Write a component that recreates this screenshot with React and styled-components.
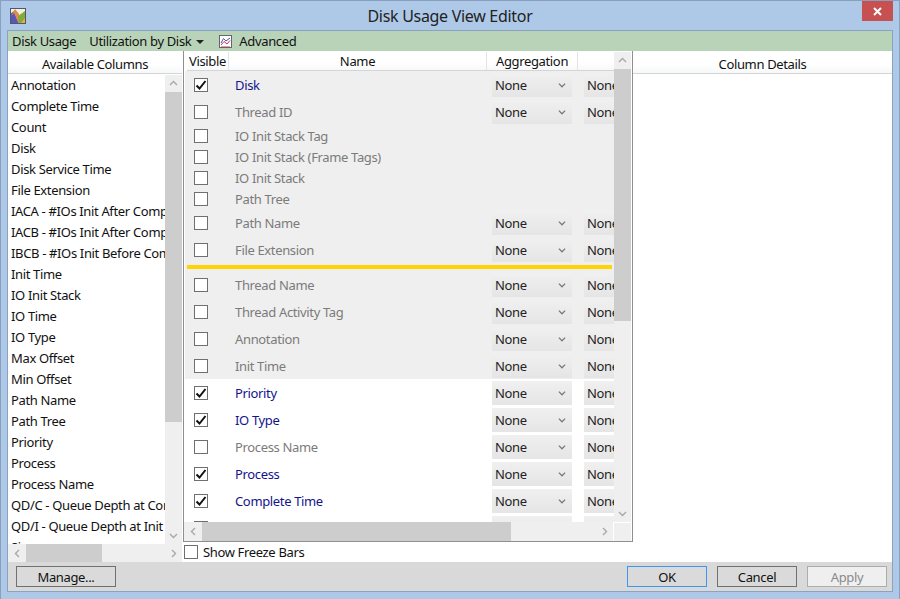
import React from "react";
import styled, { createGlobalStyle } from "styled-components";

const GlobalStyle = createGlobalStyle`
  html, body {
    margin: 0;
    padding: 0;
    background: #aec9e7;
  }
  * {
    box-sizing: border-box;
  }
`;

const Window = styled.div`
  width: 900px;
  height: 599px;
  background: #aec9e7;
  border: 1px solid #8a9fbd;
  border-bottom: 0;
  padding: 0 6px 7px;
  display: flex;
  flex-direction: column;
  font-family: "Noto Sans", "Open Sans", sans-serif;
  font-size: 13px;
  letter-spacing: -0.35px;
  color: #111;
  overflow: hidden;
`;

const TitleBar = styled.div`
  height: 29px;
  flex: none;
  display: flex;
  align-items: center;
  position: relative;
  padding-left: 3px;
`;

const Title = styled.div`
  flex: 1;
  text-align: center;
  font-size: 16px;
  letter-spacing: -0.3px;
  color: #222;
  padding-right: 19px;
`;

const CloseButton = styled.div`
  position: absolute;
  top: 0;
  right: 0;
  width: 31px;
  height: 20px;
  background: #c75050;
  display: flex;
  align-items: center;
  justify-content: center;
`;

const Frame = styled.div`
  flex: 1;
  min-height: 0;
  border: 1px solid #8aa3c0;
  display: flex;
  flex-direction: column;
`;

const Toolbar = styled.div`
  height: 20px;
  flex: none;
  background: #b9d3b8;
  display: flex;
  align-items: center;
  padding-left: 4px;
  line-height: 20px;
`;

const ToolItem = styled.span`
  display: inline-flex;
  align-items: center;
  margin-right: ${(p) => p.$gap || 0}px;
`;

const Caret = styled.span`
  display: inline-block;
  width: 0;
  height: 0;
  margin-left: 5px;
  margin-top: 1px;
  border-left: 4px solid transparent;
  border-right: 4px solid transparent;
  border-top: 4px solid #222;
`;

const Body = styled.div`
  flex: 1;
  min-height: 0;
  background: #fff;
  display: flex;
`;

const LeftPane = styled.div`
  width: 174px;
  flex: none;
  display: flex;
  flex-direction: column;
`;

const PaneHeader = styled.div`
  height: 23px;
  flex: none;
  text-align: center;
  line-height: 26px;
  background: linear-gradient(#fff 60%, #f7f8f9);
  border-bottom: 1px solid #d5d5d5;
`;

const ListArea = styled.div`
  flex: 1;
  min-height: 0;
  display: flex;
`;

const ColumnList = styled.div`
  flex: 1;
  min-width: 0;
  overflow: hidden;
  padding-top: 1px;
`;

const ColumnItem = styled.div`
  height: 21px;
  line-height: 21px;
  padding-left: 3px;
  white-space: nowrap;
  overflow: hidden;
`;

const VScroll = styled.div`
  width: 17px;
  flex: none;
  background: #efefef;
  display: flex;
  flex-direction: column;
  margin-top: ${(p) => p.$top || 0}px;
`;

const HScroll = styled.div`
  height: ${(p) => p.$h}px;
  flex: none;
  background: #efefef;
  display: flex;
  align-items: stretch;
`;

const ScrollArrow = styled.div`
  flex: none;
  width: ${(p) => p.$size}px;
  height: ${(p) => p.$size}px;
  display: flex;
  align-items: center;
  justify-content: center;
  ${(p) => p.$tail && "margin-top: auto;"}
  ${(p) => p.$end && "margin-left: auto; height: auto;"}
  ${(p) => p.$horizontal && "height: auto;"}
`;

const VThumb = styled.div`
  height: ${(p) => p.$len}px;
  flex: none;
  background: #cdcdcd;
`;

const HThumb = styled.div`
  width: ${(p) => p.$len}px;
  flex: none;
  background: #cdcdcd;
`;

const ScrollCorner = styled.div`
  width: 18px;
  flex: none;
  border-left: 1px solid #fff;
  border-top: 1px solid #fff;
`;

const Splitter = styled.div`
  width: 1px;
  flex: none;
  background: #fff;
`;

const MiddlePane = styled.div`
  width: 450px;
  flex: none;
  display: flex;
  flex-direction: column;
`;

const GridFrame = styled.div`
  flex: 1;
  min-height: 0;
  border-left: 1px solid #8f8f8f;
  border-right: 1px solid #8f8f8f;
  border-bottom: 1px solid #8f8f8f;
  display: flex;
  flex-direction: column;
  padding: 1px 1px 0 0;
`;

const GridTop = styled.div`
  flex: 1;
  min-height: 0;
  display: flex;
`;

const GridMain = styled.div`
  flex: 1;
  min-width: 0;
  display: flex;
  flex-direction: column;
  overflow: hidden;
`;

const GridHeader = styled.div`
  height: 19px;
  flex: none;
  display: flex;
  margin-left: 3px;
  line-height: 18px;
  text-align: center;
  background: linear-gradient(#fff 60%, #f7f8f9);
  border-bottom: 1px solid #d5d5d5;
`;

const HeaderCell = styled.div`
  flex: ${(p) => (p.$w ? `0 0 ${p.$w}px` : 1)};
  border-right: ${(p) => (p.$noRule ? 0 : "1px solid #e3e3e3")};
`;

const Rows = styled.div`
  flex: 1;
  min-height: 0;
  overflow: hidden;
  margin-left: 1px;
`;

const Row = styled.div`
  height: ${(p) => p.$h}px;
  display: flex;
  align-items: center;
  background: ${(p) => (p.$frozen ? "#efefef" : "#fff")};
`;

const FreezeLine = styled.div`
  height: 8px;
  background: #efefef;
  padding: 2px 2px 0;
`;

const YellowBar = styled.div`
  width: 100%;
  height: 4px;
  background: #ffd400;
`;

const Check = styled.span`
  width: 14px;
  height: 14px;
  flex: none;
  border: 1px solid #6f6f6f;
  background: #fff;
  display: flex;
  align-items: center;
  justify-content: center;
`;

const RowCheck = styled(Check)`
  margin-left: 9px;
`;

const RowName = styled.span`
  flex: 0 0 284px;
  padding-left: 27px;
  color: ${(p) => (p.$on ? "#14148c" : "#7b7b7b")};
  white-space: nowrap;
`;

const Combo = styled.div`
  flex: ${(p) => (p.$clip ? "0 0 30px" : "0 0 80px")};
  margin-right: ${(p) => (p.$clip ? 0 : 12)}px;
  height: 24px;
  padding-left: 3px;
  display: flex;
  align-items: center;
  justify-content: space-between;
  overflow: hidden;
  white-space: nowrap;
  color: #222;
  background: linear-gradient(#f0f0f0, #e5e5e5);
`;

const FreezeToggle = styled.label`
  height: 20px;
  flex: none;
  display: flex;
  align-items: center;
  gap: 5px;
  padding-left: 1px;
  padding-bottom: 1px;
`;

const DetailsPane = styled.div`
  flex: 1;
  min-width: 0;
`;

const Footer = styled.div`
  height: 29px;
  flex: none;
  background: #d9d9d9;
  display: flex;
  align-items: center;
  padding: 0 5px 0 8px;
`;

const Button = styled.div`
  width: ${(p) => p.$w || 80}px;
  height: 21px;
  margin-left: ${(p) => p.$ml || 0}px;
  ${(p) => p.$push && "margin-left: auto;"}
  border: 1px solid ${(p) => (p.$primary ? "#3f96f0" : p.$off ? "#adadad" : "#707070")};
  color: ${(p) => (p.$off ? "#8a8a8a" : "#111")};
  background: ${(p) => (p.$off ? "#efefef" : "#dadada")};
  text-align: center;
  line-height: 20px;
`;

const columns = [
  "Annotation", "Complete Time", "Count", "Disk", "Disk Service Time", "File Extension",
  "IACA - #IOs Init After Complete", "IACB - #IOs Init After Complete", "IBCB - #IOs Init Before Complete",
  "Init Time", "IO Init Stack", "IO Time", "IO Type", "Max Offset", "Min Offset", "Path Name",
  "Path Tree", "Priority", "Process", "Process Name", "QD/C - Queue Depth at Complete",
  "QD/I - Queue Depth at Init", "Size",
];

const frozenTop = [
  { name: "Disk", on: true, combo: true },
  { name: "Thread ID", combo: true },
  { name: "IO Init Stack Tag" },
  { name: "IO Init Stack (Frame Tags)" },
  { name: "IO Init Stack" },
  { name: "Path Tree" },
  { name: "Path Name", combo: true },
  { name: "File Extension", combo: true },
];

const frozenBottom = ["Thread Name", "Thread Activity Tag", "Annotation", "Init Time"].map((name) => ({
  name,
  combo: true,
}));

const open = [
  { name: "Priority", on: true, combo: true },
  { name: "IO Type", on: true, combo: true },
  { name: "Process Name", combo: true },
  { name: "Process", on: true, combo: true },
  { name: "Complete Time", on: true, combo: true },
  { name: "Size", combo: true },
];

const Tick = () => (
  <svg width="12" height="12" viewBox="0 0 12 12">
    <path d="M1.5 6.5 L4.5 9.5 L10.5 2" fill="none" stroke="#111" strokeWidth="2" />
  </svg>
);

const Chevron = ({ dir = "down", color = "#a8a8a8", size = 9 }) => {
  const turn = { down: 0, up: 180, left: 90, right: -90 }[dir];
  return (
    <svg width={size} height={size} viewBox="0 0 9 9" style={{ transform: `rotate(${turn}deg)` }}>
      <path d="M1 3 L4.5 6.5 L8 3" fill="none" stroke={color} strokeWidth="1.4" />
    </svg>
  );
};

const AppIcon = () => (
  <svg width="16" height="16" viewBox="0 0 16 16">
    <rect x="0" y="0" width="16" height="16" fill="#f4f1dc" />
    <path d="M0 16 V6 L4 3 L9 16Z" fill="#5a55b8" />
    <path d="M1 8 L5 1 L9 6 L10 16 H9 L4 5Z" fill="#d98f4a" />
    <path d="M8 8 L15 3 V16 H9Z" fill="#84aa3a" />
    <path d="M10 16 L15 10 V16Z" fill="#d9b63a" />
    <rect x="0.5" y="0.5" width="15" height="15" fill="none" stroke="#56566a" />
  </svg>
);

const ChartIcon = () => (
  <svg width="13" height="13" viewBox="0 0 13 13">
    <rect x="0.5" y="0.5" width="12" height="12" fill="#fff" stroke="#666" />
    <path d="M2 8 L4.5 3.5 L7 6 L11 3" fill="none" stroke="#3a5bc8" />
    <path d="M2 10 L5 6.5 L8 9 L11 5.5" fill="none" stroke="#e02a4a" />
    <path d="M2 11.5 H11" stroke="#e89ab0" />
  </svg>
);

const GridRow = ({ row, frozen, height }) => (
  <Row $frozen={frozen} $h={height}>
    <RowCheck>{row.on && <Tick />}</RowCheck>
    <RowName $on={row.on}>{row.name}</RowName>
    {row.combo && (
      <>
        <Combo>
          None
          <ScrollArrow $size={20}>
            <Chevron color="#777" size={8} />
          </ScrollArrow>
        </Combo>
        <Combo $clip>None</Combo>
      </>
    )}
  </Row>
);

export default function App() {
  return (
    <>
      <GlobalStyle />
      <Window>
        <TitleBar>
          <AppIcon />
          <Title>Disk Usage View Editor</Title>
          <CloseButton>
            <svg width="11" height="11" viewBox="0 0 11 11">
              <path d="M2 2 L9 9 M9 2 L2 9" stroke="#fff" strokeWidth="2" />
            </svg>
          </CloseButton>
        </TitleBar>
        <Frame>
          <Toolbar>
            <ToolItem $gap={13}>Disk Usage</ToolItem>
            <ToolItem $gap={15}>
              Utilization by Disk
              <Caret />
            </ToolItem>
            <ToolItem $gap={7}>
              <ChartIcon />
            </ToolItem>
            <ToolItem>Advanced</ToolItem>
          </Toolbar>
          <Body>
            <LeftPane>
              <PaneHeader>Available Columns</PaneHeader>
              <ListArea>
                <ColumnList>
                  {columns.map((c) => (
                    <ColumnItem key={c}>{c}</ColumnItem>
                  ))}
                </ColumnList>
                <VScroll $top={1}>
                  <ScrollArrow $size={17}>
                    <Chevron dir="up" />
                  </ScrollArrow>
                  <VThumb $len={330} />
                  <ScrollArrow $size={17} $tail>
                    <Chevron />
                  </ScrollArrow>
                </VScroll>
              </ListArea>
              <HScroll $h={18}>
                <ScrollArrow $size={18} $horizontal>
                  <Chevron dir="left" />
                </ScrollArrow>
                <HThumb $len={76} />
                <ScrollArrow $size={18} $end>
                  <Chevron dir="right" />
                </ScrollArrow>
              </HScroll>
            </LeftPane>
            <Splitter />
            <MiddlePane>
              <GridFrame>
                <GridTop>
                  <GridMain>
                    <GridHeader>
                      <HeaderCell $w={42}>Visible</HeaderCell>
                      <HeaderCell $w={258}>Name</HeaderCell>
                      <HeaderCell $w={91}>Aggregation</HeaderCell>
                      <HeaderCell $noRule />
                    </GridHeader>
                    <Rows>
                      {frozenTop.map((r) => (
                        <GridRow key={r.name} row={r} frozen height={r.combo ? 27 : 21} />
                      ))}
                      <FreezeLine>
                        <YellowBar />
                      </FreezeLine>
                      {frozenBottom.map((r) => (
                        <GridRow key={r.name} row={r} frozen height={27} />
                      ))}
                      {open.map((r) => (
                        <GridRow key={r.name} row={r} height={27} />
                      ))}
                    </Rows>
                  </GridMain>
                  <VScroll>
                    <ScrollArrow $size={17}>
                      <Chevron dir="up" />
                    </ScrollArrow>
                    <VThumb $len={252} />
                    <ScrollArrow $size={17} $tail>
                      <Chevron />
                    </ScrollArrow>
                  </VScroll>
                </GridTop>
                <HScroll $h={19}>
                  <ScrollArrow $size={18} $horizontal>
                    <Chevron dir="left" />
                  </ScrollArrow>
                  <HThumb $len={309} />
                  <ScrollArrow $size={18} $end>
                    <Chevron dir="right" />
                  </ScrollArrow>
                  <ScrollCorner />
                </HScroll>
              </GridFrame>
              <FreezeToggle>
                <Check />
                Show Freeze Bars
              </FreezeToggle>
            </MiddlePane>
            <DetailsPane>
              <PaneHeader>Column Details</PaneHeader>
            </DetailsPane>
          </Body>
          <Footer>
            <Button $w={100}>Manage...</Button>
            <Button $push $primary>OK</Button>
            <Button $ml={10}>Cancel</Button>
            <Button $ml={10} $off>Apply</Button>
          </Footer>
        </Frame>
      </Window>
    </>
  );
}
